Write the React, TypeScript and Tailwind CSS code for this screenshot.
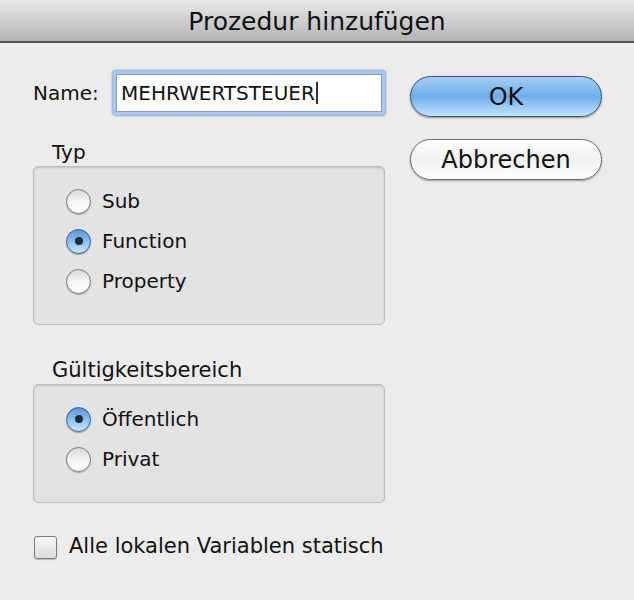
import React from 'react';

const font = { fontFamily: '"DejaVu Sans", Verdana, sans-serif' };

function Radio({ checked, label }: { checked?: boolean; label: string }) {
  return (
    <div className="flex items-center h-[40px]">
      {checked ? (
        <div className="w-[25px] h-[25px] rounded-full border border-[#3b5f8f] bg-gradient-to-b from-[#5b93d6] via-[#8cc0f0] to-[#c9e6ff] shadow-[0_1px_1px_rgba(0,0,0,0.3)] flex items-center justify-center">
          <div className="w-[8px] h-[8px] rounded-full bg-[#1c2a3a]" />
        </div>
      ) : (
        <div className="w-[25px] h-[25px] rounded-full border border-[#7a7a7a] bg-gradient-to-b from-[#d8d8d8] via-[#f4f4f4] to-white shadow-[0_1px_1px_rgba(0,0,0,0.25)]" />
      )}
      <span className="ml-[11px] text-[20px] text-[#111]">{label}</span>
    </div>
  );
}

export default function App() {
  return (
    <div className="w-[634px] h-[600px] bg-[#ececec] overflow-hidden" style={font}>
      {/* Titelleiste */}
      <div className="h-[43px] bg-gradient-to-b from-[#e9e9e9] to-[#b4b4b4] border-b-2 border-[#555] flex items-center justify-center">
        <span className="text-[25px] text-[#111] leading-none pt-[2px]">Prozedur hinzufügen</span>
      </div>

      <div className="flex pl-[33px] pt-[28px]">
        {/* linke Spalte */}
        <div className="w-[352px]">
          <div className="flex items-center h-[44px]">
            <span className="text-[20px] text-[#111] w-[80px]">Name:</span>
            <div className="w-[272px] h-[44px] rounded-[3px] p-[3px] bg-[#a9c8ec] shadow-[0_0_2px_1px_rgba(90,140,210,0.7)]">
              <div className="w-full h-full bg-white border border-[#7f9cc4] flex items-center pl-[4px]">
                <span className="text-[20px] text-[#111]">MEHRWERTSTEUER</span>
                <span className="w-[2px] h-[22px] bg-[#333] ml-[1px]" />
              </div>
            </div>
          </div>

          <div className="mt-[24px] pl-[19px] text-[20px] text-[#111] h-[27px] leading-[27px]">Typ</div>
          <div className="h-[159px] rounded-[5px] border border-[#bdbdbd] bg-[#e3e3e3] shadow-[inset_0_1px_2px_rgba(0,0,0,0.15)] pl-[32px] pt-[14px]">
            <Radio label="Sub" />
            <Radio label="Function" checked />
            <Radio label="Property" />
          </div>

          <div className="mt-[32px] pl-[19px] text-[21px] text-[#111] h-[27px] leading-[27px]">Gültigkeitsbereich</div>
          <div className="h-[119px] rounded-[5px] border border-[#bdbdbd] bg-[#e3e3e3] shadow-[inset_0_1px_2px_rgba(0,0,0,0.15)] pl-[32px] pt-[14px]">
            <Radio label="Öffentlich" checked />
            <Radio label="Privat" />
          </div>

          <div className="flex items-center mt-[32px] h-[24px]">
            <div className="ml-[1px] w-[23px] h-[23px] rounded-[3px] border border-[#7a7a7a] bg-gradient-to-b from-[#f8f8f8] to-[#dcdcdc] shadow-[0_1px_1px_rgba(0,0,0,0.25)]" />
            <span className="ml-[12px] text-[21px] text-[#111]">Alle lokalen Variablen statisch</span>
          </div>
        </div>

        {/* rechte Spalte */}
        <div className="ml-[25px] w-[192px] pt-[5px] flex flex-col gap-[22px]">
          <button className="h-[41px] rounded-full border border-[#3a4f7a] bg-gradient-to-b from-[#a6cdf5] via-[#6eaeea] to-[#c2e2ff] shadow-[0_1px_2px_rgba(0,0,0,0.4)] text-[24px] text-[#111]">
            OK
          </button>
          <button className="h-[41px] rounded-full border border-[#6d6d6d] bg-gradient-to-b from-white via-[#f2f2f2] to-white shadow-[0_1px_2px_rgba(0,0,0,0.35)] text-[24px] text-[#111]">
            Abbrechen
          </button>
        </div>
      </div>
    </div>
  );
}
